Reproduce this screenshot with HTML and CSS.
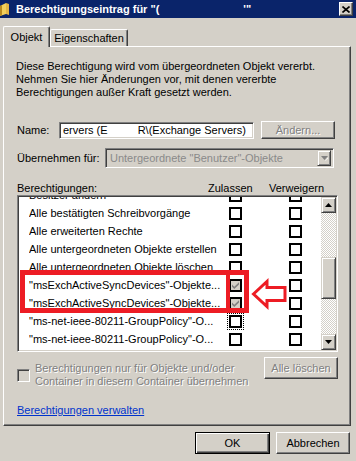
FILE: index.html
```html
<!DOCTYPE html>
<html lang="de">
<head>
<meta charset="utf-8">
<title>Berechtigungseintrag</title>
<link rel="stylesheet" href="styles.css">
</head>
<body>
<div class="titlebar">
  <svg class="app-icon" width="9" height="13" viewBox="0 0 9 13">
    <path d="M0 3 L6 0 L6 11 L0 13 Z" fill="#f2cf5b"/>
    <path d="M0 3 L2 2 L2 12.3 L0 13 Z" fill="#b98a1e"/>
    <path d="M6 0 L9 1 L9 12 L6 11 Z" fill="#e3b545"/>
  </svg>
  <span class="title">Berechtigungseintrag für "(</span>
  <span class="title-tail">'"</span>
  <span class="close-btn">
    <svg width="8" height="7" viewBox="0 0 8 7"><path d="M0.5 0.5 L7.5 6.5 M7.5 0.5 L0.5 6.5" stroke="#000" stroke-width="1.6"/></svg>
  </span>
</div>

<div class="tabs">
  <div class="tab tab-active">Objekt</div>
  <div class="tab tab-inactive">Eigenschaften</div>
</div>

<div class="panel">
  <p class="intro">Diese Berechtigung wird vom übergeordneten Objekt vererbt.<br>Nehmen Sie hier Änderungen vor, mit denen vererbte<br>Berechtigungen außer Kraft gesetzt werden.</p>

  <div class="name-row">
    <span class="name-label">Name:</span>
    <div class="field name-field"><span class="name-a">ervers (E</span><span class="name-gap"></span><span>R\(Exchange Servers)</span></div>
    <button class="btn btn-disabled change-btn" disabled>Ändern...</button>
  </div>

  <div class="apply-row">
    <span class="apply-label">Übernehmen für:</span>
    <div class="field combo">
      <span class="combo-text">Untergeordnete "Benutzer"-Objekte</span>
      <span class="combo-arrow">
        <svg width="7" height="5" viewBox="0 0 7 5"><path d="M0 0 H7 L3.5 4 Z" fill="#808080"/><path d="M4 5 L7.5 1 L7.5 2 L4.5 5 Z" fill="#fff"/></svg>
      </span>
    </div>
  </div>

  <div class="perm-head">
    <span class="head-name">Berechtigungen:</span>
    <span class="head-allow">Zulassen</span>
    <span class="head-deny">Verweigern</span>
  </div>

  <div class="listbox">
    <div class="list-viewport">
      <div class="list-rows">
        <div class="perm-row"><span class="perm-name">Besitzer ändern</span><span class="cb"></span><span class="cb cb-deny"></span></div>
        <div class="perm-row"><span class="perm-name">Alle bestätigten Schreibvorgänge</span><span class="cb"></span><span class="cb cb-deny"></span></div>
        <div class="perm-row"><span class="perm-name">Alle erweiterten Rechte</span><span class="cb"></span><span class="cb cb-deny"></span></div>
        <div class="perm-row"><span class="perm-name">Alle untergeordneten Objekte erstellen</span><span class="cb"></span><span class="cb cb-deny"></span></div>
        <div class="perm-row"><span class="perm-name">Alle untergeordneten Objekte löschen</span><span class="cb"></span><span class="cb cb-deny"></span></div>
        <div class="perm-row"><span class="perm-name">"msExchActiveSyncDevices"-Objekte...</span><span class="cb cb-checked"><svg width="9" height="9" viewBox="0 0 9 9"><path d="M1 3.5 L3.3 5.8 L8 1.2 L8 3.4 L3.3 8 L1 5.7 Z" fill="#808080"/></svg></span><span class="cb cb-deny"></span></div>
        <div class="perm-row"><span class="perm-name">"msExchActiveSyncDevices"-Objekte...</span><span class="cb cb-checked"><svg width="9" height="9" viewBox="0 0 9 9"><path d="M1 3.5 L3.3 5.8 L8 1.2 L8 3.4 L3.3 8 L1 5.7 Z" fill="#808080"/></svg></span><span class="cb cb-deny"></span></div>
        <div class="perm-row"><span class="perm-name">"ms-net-ieee-80211-GroupPolicy"-O...</span><span class="cb cb-focus"></span><span class="cb cb-deny"></span></div>
        <div class="perm-row"><span class="perm-name">"ms-net-ieee-80211-GroupPolicy"-O...</span><span class="cb"></span><span class="cb cb-deny"></span></div>
        <div class="perm-row"><span class="perm-name"></span><span class="cb"></span><span class="cb cb-deny"></span></div>
      </div>
    </div>
    <div class="scrollbar">
      <span class="sb-btn"><svg width="7" height="4" viewBox="0 0 7 4"><path d="M3.5 0 L7 4 H0 Z" fill="#000"/></svg></span>
      <div class="sb-track"><span class="sb-thumb"></span></div>
      <span class="sb-btn"><svg width="7" height="4" viewBox="0 0 7 4"><path d="M0 0 H7 L3.5 4 Z" fill="#000"/></svg></span>
    </div>
  </div>

  <div class="inherit-row">
    <span class="cb-sunken"></span>
    <span class="inherit-text disabled-text">Berechtigungen nur für Objekte und/oder<br>Container in diesem Container übernehmen</span>
    <button class="btn btn-disabled clear-btn" disabled>Alle löschen</button>
  </div>

  <a class="manage-link" href="#">Berechtigungen verwalten</a>
</div>

<div class="footer">
  <button class="btn btn-default">OK</button>
  <button class="btn">Abbrechen</button>
</div>

<svg class="annotation" width="356" height="461" viewBox="0 0 356 461">
  <rect x="22.5" y="272.5" width="224" height="38" fill="none" stroke="#ed1c24" stroke-width="5"/>
  <line x1="228" y1="270" x2="228" y2="313" stroke="#ed1c24" stroke-width="4"/>
  <polygon points="253.5,294 267,281.5 267,287.5 285,287.5 285,300.5 267,300.5 267,306.5" fill="none" stroke="#ed1c24" stroke-width="3" stroke-linejoin="miter"/>
</svg>
</body>
</html>
```

FILE: styles.css
```css
* { box-sizing: border-box; }

html, body {
  margin: 0;
  padding: 0;
}

body {
  width: 356px;
  height: 461px;
  overflow: hidden;
  background: #d4d0c8;
  font-family: "Liberation Sans", Arial, sans-serif;
  font-size: 11px;
  color: #000;
  position: relative;
}

/* Title bar */
.titlebar {
  height: 18px;
  background: #0a246a;
  color: #fff;
  display: flex;
  align-items: center;
}

.app-icon {
  flex: none;
  margin: 1px 7px 0 0;
}

.title {
  font-weight: bold;
  white-space: pre;
}

.title-tail {
  font-weight: bold;
  margin-left: 84px;
}

.close-btn {
  margin-left: auto;
  margin-right: 3px;
  width: 14px;
  height: 14px;
  background: #d4d0c8;
  border: 1px solid;
  border-color: #fff #404040 #404040 #fff;
  box-shadow: inset -1px -1px #808080;
  display: flex;
  align-items: center;
  justify-content: center;
}

/* Tabs */
.tabs {
  height: 28px;
  display: flex;
  align-items: flex-end;
  padding-left: 3px;
}

.tab {
  background: #d4d0c8;
  border-top: 1px solid #fff;
  border-left: 1px solid #fff;
  border-right: 1px solid #404040;
  box-shadow: inset -1px 0 #808080;
  border-top-left-radius: 2px;
  border-top-right-radius: 2px;
  display: flex;
  align-items: center;
  justify-content: center;
}

.tab-active {
  width: 47px;
  height: 21px;
  margin-bottom: -1px;
  position: relative;
  z-index: 1;
  padding-bottom: 1px;
}

.tab-inactive {
  width: 78px;
  height: 17px;
}

/* Panel */
.panel {
  margin-left: 3px;
  width: 348px;
  height: 380px;
  border-top: 1px solid #fff;
  border-left: 1px solid #fff;
  border-right: 1px solid #404040;
  border-bottom: 1px solid #404040;
  box-shadow: inset -1px -1px #808080;
  padding: 13px 12px 0 13px;
}

.intro {
  margin: 0;
  line-height: 13px;
  margin-left: -1px;
}

/* 3D helpers */
.field {
  border: 1px solid;
  border-color: #808080 #fff #fff #808080;
  box-shadow: inset 1px 1px #404040, inset -1px -1px #d4d0c8;
}

.btn {
  font: inherit;
  color: #000;
  background: #d4d0c8;
  border: 1px solid;
  border-color: #fff #404040 #404040 #fff;
  box-shadow: inset -1px -1px #808080;
  padding: 0;
  display: flex;
  align-items: center;
  justify-content: center;
}

.btn-disabled,
.disabled-text {
  color: #808080;
  text-shadow: 1px 1px 0 #fff;
}

/* Name row */
.name-row {
  margin-top: 22px;
  height: 18px;
  display: flex;
  align-items: center;
}

.name-label {
  width: 42px;
}

.name-field {
  width: 195px;
  height: 17px;
  background: #fff;
  display: flex;
  align-items: center;
  padding-left: 3px;
  white-space: pre;
  overflow: hidden;
}

.name-gap {
  width: 30px;
  flex: none;
}

.change-btn {
  margin-left: 7px;
  width: 74px;
  height: 18px;
}

/* Apply row */
.apply-row {
  margin-top: 9px;
  height: 20px;
  display: flex;
  align-items: center;
}

.apply-label {
  width: 88px;
}

.combo {
  width: 229px;
  height: 20px;
  background: #d4d0c8;
  display: flex;
  align-items: center;
  padding: 0 2px 0 4px;
}

.combo-text {
  flex: 1;
  color: #8a8a8a;
}

.combo-arrow {
  width: 14px;
  height: 16px;
  background: #d4d0c8;
  border: 1px solid;
  border-color: #d4d0c8 #404040 #404040 #d4d0c8;
  box-shadow: inset 1px 1px #fff, inset -1px -1px #808080;
  display: flex;
  align-items: center;
  justify-content: center;
}

/* Header */
.perm-head {
  margin-top: 13px;
  height: 14px;
  line-height: 14px;
  display: flex;
}

.head-name {
  width: 191px;
}

.head-allow {
  width: 61px;
}

/* List */
.listbox {
  width: 321px;
  height: 157px;
  background: #fff;
  display: flex;
  border: 1px solid;
  border-color: #808080 #fff #fff #808080;
  box-shadow: inset 1px 1px #404040, inset -1px -1px #d4d0c8;
  padding: 1px;
}

.list-viewport {
  flex: 1;
  overflow: hidden;
}

.list-rows {
  margin-top: -11px;
}

.perm-row {
  height: 18px;
  display: flex;
  align-items: center;
  padding-left: 10px;
}

.perm-name {
  width: 200px;
  white-space: nowrap;
  overflow: hidden;
  flex: none;
}

.cb {
  flex: none;
  width: 13px;
  height: 13px;
  border: 2px solid #000;
  background: #fff;
  display: flex;
  align-items: center;
  justify-content: center;
}

.cb-deny {
  margin-left: 47px;
}

.cb-checked {
  background: #d4d0c8;
}

.cb-focus {
  outline: 1px dotted #000;
  outline-offset: 1px;
}

.scrollbar {
  width: 15px;
  display: flex;
  flex-direction: column;
}

.sb-btn {
  height: 16px;
  flex: none;
  background: #d4d0c8;
  border: 1px solid;
  border-color: #d4d0c8 #404040 #404040 #d4d0c8;
  box-shadow: inset 1px 1px #fff, inset -1px -1px #808080;
  display: flex;
  align-items: center;
  justify-content: center;
}

.sb-track {
  flex: 1;
  background: repeating-conic-gradient(#fff 0 25%, #d4d0c8 0 50%) 0 0 / 2px 2px;
  padding-top: 44px;
}

.sb-thumb {
  display: block;
  height: 42px;
  background: #d4d0c8;
  border: 1px solid;
  border-color: #d4d0c8 #404040 #404040 #d4d0c8;
  box-shadow: inset 1px 1px #fff, inset -1px -1px #808080;
}

/* Inherit row */
.inherit-row {
  margin-top: 5px;
  height: 31px;
  display: flex;
  align-items: flex-start;
}

.cb-sunken {
  flex: none;
  margin-top: 12px;
  width: 13px;
  height: 13px;
  background: #d4d0c8;
  border: 1px solid;
  border-color: #808080 #fff #fff #808080;
  box-shadow: inset 1px 1px #404040, inset -1px -1px #d4d0c8;
}

.inherit-text {
  margin: 5px 0 0 5px;
  line-height: 13px;
  white-space: nowrap;
}

.clear-btn {
  margin-left: auto;
  width: 74px;
  height: 22px;
}

.manage-link {
  display: block;
  margin-top: 16px;
  width: max-content;
  line-height: 13px;
  color: #0033cc;
  text-decoration: underline;
}

/* Footer */
.footer {
  margin-top: 6px;
  display: flex;
  justify-content: flex-end;
  gap: 6px;
  padding-right: 6px;
}

.footer .btn {
  width: 75px;
  height: 22px;
}

.footer .btn:last-child {
  width: 74px;
}

.btn-default {
  border: 1px solid #000;
  box-shadow: inset 1px 1px #fff, inset -1px -1px #404040, inset -2px -2px #808080;
}

/* Annotation overlay */
.annotation {
  position: absolute;
  left: 0;
  top: 0;
  pointer-events: none;
}
```
